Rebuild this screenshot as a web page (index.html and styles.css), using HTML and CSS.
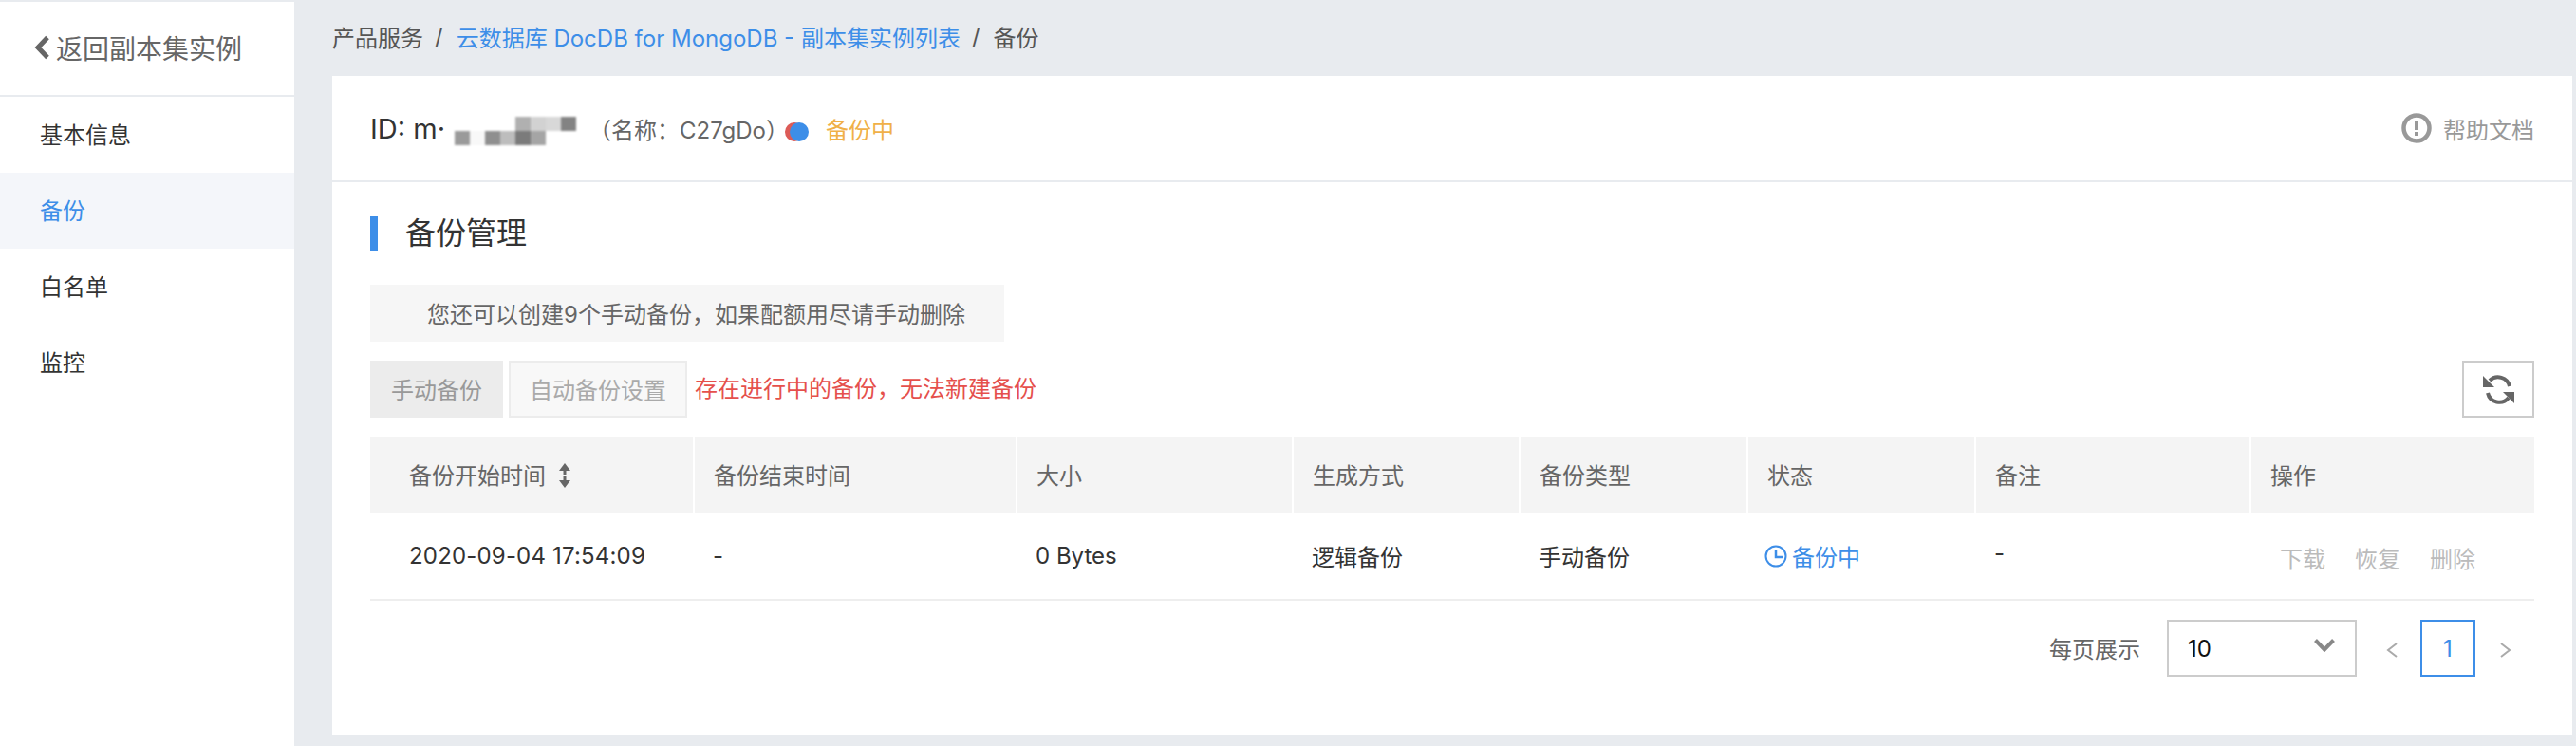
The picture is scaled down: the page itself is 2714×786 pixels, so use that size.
FILE: index.html
```html
<!DOCTYPE html>
<html lang="zh-CN">
<head>
<meta charset="utf-8">
<title>备份</title>
<link rel="stylesheet" href="styles.css">
</head>
<body>
<div class="page">
  <aside class="side">
    <a class="back">
      <svg class="back-ico" viewBox="0 0 18 26"><path d="M15 2.500 5 13l10 10.500" fill="none" stroke="#666" stroke-width="5"/></svg>
      <span>返回副本集实例</span>
    </a>
    <nav class="nav">
      <a class="nav-item">基本信息</a>
      <a class="nav-item active">备份</a>
      <a class="nav-item">白名单</a>
      <a class="nav-item">监控</a>
    </nav>
  </aside>
  <main class="main">
    <div class="crumbs">
      <span>产品服务</span><span class="sep">/</span>
      <a class="crumb-link">云数据库 DocDB for MongoDB - 副本集实例列表</a><span class="sep">/</span>
      <span>备份</span>
    </div>
    <section class="card">
      <header class="card-head">
        <span class="inst-id">ID: m·</span>
        <span class="mosaic">
          <i></i><i></i><i></i><i></i><i class="t1"></i><i class="t2"></i><i class="t3"></i><i class="t4"></i>
          <i class="t5"></i><i class="t6"></i><i class="t7"></i><i class="t8"></i><i class="t9"></i><i class="t10"></i><i></i><i></i>
        </span>
        <span class="inst-name">（名称：C27gDo）</span>
        <svg class="dots" viewBox="0 0 25 20"><circle cx="10" cy="10" r="10" fill="#dc5b57"/><circle cx="15" cy="10" r="10" fill="#3d8ee8"/></svg>
        <span class="inst-state">备份中</span>
        <a class="help">
          <svg class="help-ico" viewBox="0 0 32 32"><circle cx="16" cy="16" r="13.500" fill="none" stroke="#999" stroke-width="4.500"/><rect x="14" y="8" width="4" height="10" fill="#999"/><rect x="14" y="20" width="4" height="4" fill="#999"/></svg>
          <span>帮助文档</span>
        </a>
      </header>
      <div class="card-body">
        <h2 class="title">备份管理</h2>
        <div class="notice">您还可以创建9个手动备份，如果配额用尽请手动删除</div>
        <div class="toolbar">
          <button class="btn btn-fill">手动备份</button>
          <button class="btn btn-line">自动备份设置</button>
          <span class="warn">存在进行中的备份，无法新建备份</span>
          <button class="btn-refresh" aria-label="刷新">
            <svg viewBox="0 0 33 33" class="refresh-ico">
              <path d="M5 20a12.500 12.500 0 0 0 22 5" fill="none" stroke="#666" stroke-width="4"/>
              <path d="M28 13A12.500 12.500 0 0 0 7 7" fill="none" stroke="#666" stroke-width="4"/>
              <path d="M0 2 12 14H0z" fill="#666"/>
              <path d="M33 31 21 19h12z" fill="#666"/>
            </svg>
          </button>
        </div>
        <table class="table">
          <thead>
            <tr>
              <th class="c1">备份开始时间
                <svg class="sort" viewBox="0 0 14 26"><path d="M7 0 13 8H8.500V12H5.500V8H1z" fill="#666"/><path d="M7 26 1 18H5.500V14H8.500V18H13z" fill="#666"/></svg>
              </th>
              <th class="c2">备份结束时间</th>
              <th class="c3">大小</th>
              <th class="c4">生成方式</th>
              <th class="c5">备份类型</th>
              <th class="c6">状态</th>
              <th class="c7">备注</th>
              <th class="c8">操作</th>
            </tr>
          </thead>
          <tbody>
            <tr>
              <td class="c1">2020-09-04 17:54:09</td>
              <td>-</td>
              <td>0 Bytes</td>
              <td>逻辑备份</td>
              <td>手动备份</td>
              <td class="status">
                <svg class="clock" viewBox="0 0 24 24"><circle cx="12" cy="12" r="10.500" fill="none" stroke="#3d8ee8" stroke-width="2"/><path d="M12 5v8h7" fill="none" stroke="#3d8ee8" stroke-width="2.500"/></svg><span>备份中</span>
              </td>
              <td class="note">-</td>
              <td class="ops"><a>下载</a><a>恢复</a><a>删除</a></td>
            </tr>
          </tbody>
        </table>
        <div class="pager">
          <span class="pager-label">每页展示</span>
          <div class="select">
            <span>10</span>
            <svg class="select-arrow" viewBox="0 0 22 14"><path d="M1.500 1.500 11 11.500 20.500 1.500" fill="none" stroke="#888" stroke-width="4"/></svg>
          </div>
          <svg class="page-arrow prev" viewBox="0 0 14 22"><path d="M12 4 3 11l9 7" fill="none" stroke="#aaa" stroke-width="2"/></svg>
          <span class="page-num">1</span>
          <svg class="page-arrow next" viewBox="0 0 14 22"><path d="M2 4l9 7-9 7" fill="none" stroke="#aaa" stroke-width="2"/></svg>
        </div>
      </div>
    </section>
  </main>
</div>
</body>
</html>
```

FILE: styles.css
```css
* { box-sizing: border-box; }
html, body { margin: 0; height: 100%; }
body {
  background: #e8ebef;
  font-family: Inter, "Noto Sans CJK SC", sans-serif;
  font-size: 24px;
  color: #333;
  overflow: hidden;
}
a { text-decoration: none; }
.page { display: flex; height: 786px; }

.side { width: 310px; margin-top: 2px; background: #fff; flex: none; }
.back {
  display: flex; align-items: center; height: 98px; padding: 0 0 2px 35px;
  font-size: 28px; color: #666;
}
.back-ico { width: 18px; height: 26px; margin-right: 6px; }
.nav { border-top: 2px solid #e8ebef; }
.nav-item { display: flex; align-items: center; height: 80px; padding: 0 0 3px 42px; color: #333; }
.nav-item.active { background: #f4f6fa; color: #3d8ee8; }

.main { flex: 1; padding: 0 4px 0 40px; min-width: 0; }
.crumbs { display: flex; align-items: center; height: 80px; padding-bottom: 3px; color: #555; }
.sep { margin: 0 14px 0 12px; }
.crumb-link { color: #3d8ee8; }

.card { background: #fff; height: 694px; }
.card-head {
  display: flex; align-items: center; height: 112px; padding: 0 40px;
  border-bottom: 2px solid #e8ebef;
}
.inst-id { font-size: 29px; color: #333; line-height: 1; }
.mosaic {
  display: grid; grid-template-columns: repeat(8, 16px); grid-template-rows: repeat(2, 15px);
  margin: 6px 13px 0 10px; filter: blur(1px);
}
.t1 { background: #b0b0b0; } .t2 { background: #d2d2d2; } .t3 { background: #d8d8d8; } .t4 { background: #838383; }
.t5 { background: #9a9a9a; } .t6 { background: #f8f8f8; } .t7 { background: #8f8f8f; } .t8 { background: #bdbdbd; }
.t9 { background: #7b7b7b; } .t10 { background: #a5a5a5; }
.inst-name { color: #666; }
.dots { width: 25px; height: 20px; margin: 7px 18px 0 -4px; flex: none; }
.inst-state { color: #f0b048; }
.help { margin-left: auto; display: flex; align-items: center; color: #999; }
.help-ico { width: 32px; height: 32px; margin-right: 12px; }

.card-body { padding: 36px 40px 0; }
.title {
  margin: 0; height: 36px; line-height: 36px; padding-left: 29px;
  font-size: 32px; font-weight: 400; color: #333; border-left: 8px solid #3d8ee8;
}
.notice {
  width: 668px; height: 60px; margin-top: 36px; padding: 0 0 2px 60px; background: #f6f6f6;
  display: flex; align-items: center; color: #666;
}
.toolbar { display: flex; align-items: center; margin-top: 20px; height: 60px; }
.btn { height: 60px; font: inherit; padding: 0 0 2px; }
.btn-fill { width: 140px; background: #ececec; border: 0; color: #999; }
.btn-line { width: 188px; margin-left: 6px; background: #f8f8f8; border: 2px solid #ececec; color: #aaa; }
.warn { margin: 0 0 6px 8px; color: #e5504c; }
.btn-refresh {
  margin-left: auto; width: 76px; height: 60px; padding: 0; background: #fff;
  border: 2px solid #ccc; display: flex; align-items: center; justify-content: center;
}
.refresh-ico { width: 33px; height: 33px; }

.table { width: 2280px; margin-top: 20px; border-collapse: collapse; table-layout: fixed; }
.table th {
  height: 80px; padding: 0 0 2px 20px; background: #f4f4f4; color: #666; font-weight: 400;
  text-align: left; border-right: 2px solid #fff;
}
.table th:last-child { border-right: 0; }
.table td { height: 92px; padding: 0 0 0 20px; color: #333; border-bottom: 2px solid #eee; }
.table .c1 { padding-left: 41px; }
.table td.c1 { letter-spacing: .18px; }
.table th.c1 { width: 341px; } .c2 { width: 340px; } .c3 { width: 291px; } .c4 { width: 239px; }
.c5 { width: 240px; } .c6 { width: 240px; } .c7 { width: 290px; } .c8 { width: 299px; }
.sort { width: 14px; height: 26px; margin: -3px 0 0 6px; vertical-align: middle; }
.table td.status { padding-left: 18px; color: #3d8ee8; }
.status span { vertical-align: middle; }
.clock { width: 24px; height: 24px; margin-right: 5px; vertical-align: middle; }
.table td.note { padding-bottom: 6px; }
.table td.ops { padding: 4px 0 0 31px; color: #bbb; }
.ops a { margin-right: 31px; }

.pager { display: flex; align-items: center; margin-top: 20px; height: 60px; justify-content: flex-end; padding-right: 23px; }
.pager-label { color: #666; margin: 0 28px 2px 0; }
.select {
  width: 200px; height: 60px; border: 2px solid #ccc; display: flex; align-items: center;
  justify-content: space-between; padding: 0 21px 0 20px; color: #111;
}
.select-arrow { width: 22px; height: 14px; margin-top: -6px; }
.page-arrow { width: 14px; height: 22px; flex: none; }
.prev { margin: 4px 23px 0 30px; }
.next { margin: 4px 0 0 25px; }
.page-num {
  width: 58px; height: 60px; border: 2px solid #3d8ee8; color: #3d8ee8;
  display: flex; align-items: center; justify-content: center;
}
```
